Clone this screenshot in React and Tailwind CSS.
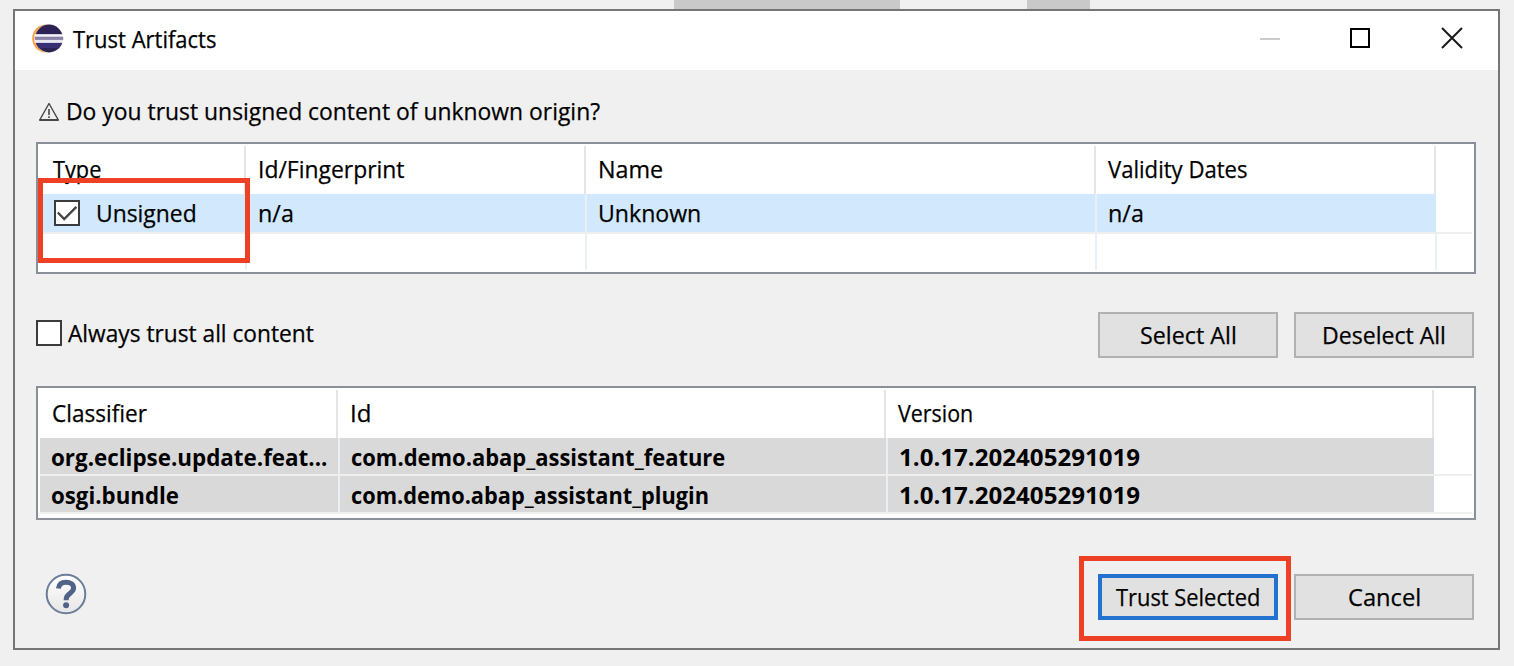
import { useLayoutEffect, useRef, useState } from 'react';

// Single-line label condensed horizontally so that it fills `width` pixels.
function Label({ width, bold, children }) {
  const ref = useRef(null);
  const [scale, setScale] = useState(1);
  useLayoutEffect(() => {
    setScale(width / ref.current.offsetWidth);
  }, [width, children]);
  return (
    <span className="block shrink-0" style={{ width }}>
      <span
        ref={ref}
        className={`inline-block origin-left whitespace-nowrap align-top ${
          bold ? 'font-bold' : '[-webkit-text-stroke:0.25px_#000]'
        }`}
        style={{ transform: `scaleX(${scale})` }}
      >
        {children}
      </span>
    </span>
  );
}

function EclipseLogo() {
  return (
    <svg width="32" height="30" viewBox="0 0 32 30">
      <circle cx="14.2" cy="14.5" r="14" fill="#f7a246" />
      <circle cx="17.2" cy="14.5" r="14.2" fill="#fff3e2" />
      <circle cx="17" cy="14.5" r="13.9" fill="#2c2255" />
      <path d="M4 18h26a14 14 0 0 1-3 6H7a14 14 0 0 1-3-6z" fill="#383075" />
      <path d="M2.5 10.2h28.7v8.6H2.5z" fill="#fff" />
      <path d="M3 11.7h28v1.2H3zM3 16.4h28v1.2H3z" fill="#d4d0e0" />
      <path d="M3 13h28.2v2.9H3z" fill="#8780a8" />
    </svg>
  );
}

function Button({ width, primary, children }) {
  return (
    <button
      type="button"
      className={`flex h-[46px] w-[180px] items-center justify-center bg-[#e1e1e1] ${
        primary ? 'border-4 border-[#2472d0]' : 'border-2 border-[#b1b1b1]'
      }`}
    >
      <Label width={width}>{children}</Label>
    </button>
  );
}

function Checkbox({ checked }) {
  return (
    <span className="flex size-[26px] shrink-0 items-center justify-center border-2 border-[#3c3c3c] bg-white">
      {checked && (
        <svg width="22" height="22" viewBox="0 0 22 22" fill="none" stroke="#444" strokeWidth="2.4">
          <path d="M1.8 10.5 8.2 17 20.4 4.800" />
        </svg>
      )}
    </span>
  );
}

const h = 'flex items-center border-r-2 border-[#e5e5e5] pb-0.5 pl-3';
const blue = 'flex items-center bg-[#d1e8fd] border-r-2 border-[#e7eff8] pl-[11px]';
const blank = 'border-r-2 border-[#e9f1f8]';
const gray = 'flex items-center bg-[#d9d9d9] border-r-2 border-[#eceff2] pl-[11px] pt-0.5';
const grayLast = 'flex items-center bg-[#d9d9d9] border-r-2 border-[#d3d9e1] pl-[11px] pt-0.5';

export default function App() {
  return (
    <div className="relative flex h-[666px] w-[1514px] flex-col overflow-hidden bg-[#f0f0f0] font-['Open_Sans',sans-serif] text-[24px] leading-8 text-black">
      <div className="flex h-[9px] shrink-0 pl-[674px]">
        <div className="w-[226px] bg-[#c9c9c9]" />
        <div className="ml-[127px] w-[63px] bg-[#c9c9c9]" />
      </div>

      <div className="ml-[13px] flex h-[641px] w-[1487px] flex-col border-2 border-[#767676]">
        <header className="flex h-[59px] shrink-0 items-center bg-white pb-[3px] pl-[17px]">
          <EclipseLogo />
          <div className="ml-[9px] flex">
            <Label width={143}>Trust Artifacts</Label>
          </div>
          <svg className="mr-[34px] mb-0.5 ml-auto" width="210" height="24" viewBox="0 0 210 24" fill="none">
            <path d="M6 13h20" stroke="#cbcbcb" strokeWidth="2" />
            <path d="M97 3h18v18H97z" stroke="#000" strokeWidth="2" />
            <path d="M188 2l20 20M208 2l-20 20" stroke="#1a1a1a" strokeWidth="2" />
          </svg>
        </header>

        <main className="flex flex-col pl-[21px]">
          <div className="mt-[25px] flex h-8 items-center">
            <svg className="mt-0.5 ml-0.5" width="22" height="20" viewBox="0 0 22 20" fill="none" stroke="#444">
              <path d="M11 1.5 20.3 18H1.7z" strokeWidth="1.4" strokeLinejoin="round" />
              <path d="M1.5 18h19" strokeWidth="1.8" />
              <path d="M11 7v6M11 14.3v1.8" strokeWidth="1.6" />
            </svg>
            <div className="ml-[6px]">
              <Label width={534}>Do you trust unsigned content of unknown origin?</Label>
            </div>
          </div>

          <section className="mt-[15px] h-[132px] w-[1440px] border-2 border-[#8b8f98] bg-white pl-0.5">
            <div className="grid h-[50px] grid-cols-[206px_340px_510px_340px_36px] pt-0.5">
              <div className="flex items-center border-r-2 border-[#e5e5e5] pb-0.5 pl-[13px]"><Label width={48}>Type</Label></div>
              <div className={h}><Label width={147}>Id/Fingerprint</Label></div>
              <div className={h}><Label width={65}>Name</Label></div>
              <div className={h}><Label width={140}>Validity Dates</Label></div>
              <div />
            </div>
            <div className="grid h-[38px] grid-cols-[207px_340px_510px_339px_36px]">
              <div className={blue}>
                <span className="ml-[3px]"><Checkbox checked /></span>
                <div className="ml-4"><Label width={101}>Unsigned</Label></div>
              </div>
              <div className={blue}><Label width={36}>n/a</Label></div>
              <div className={blue}><Label width={103}>Unknown</Label></div>
              <div className="flex items-center bg-[#d1e8fd] pl-[11px]"><Label width={36}>n/a</Label></div>
              <div />
            </div>
            <div className="h-0.5 w-[1432px] bg-[#efefef]" />
            <div className="grid h-9 grid-cols-[207px_340px_510px_340px_35px]">
              <div className={blank} />
              <div className={blank} />
              <div className={blank} />
              <div className={blank} />
              <div />
            </div>
          </section>

          <div className="mt-[38px] flex h-[46px] w-[1438px] items-center">
            <div className="flex items-center pb-1">
              <Checkbox />
              <div className="ml-[6px]"><Label width={246}>Always trust all content</Label></div>
            </div>
            <div className="ml-auto flex gap-4">
              <Button width={97}>Select All</Button>
              <Button width={124}>Deselect All</Button>
            </div>
          </div>

          <section className="mt-7 h-[134px] w-[1440px] border-2 border-[#8b8f98] bg-white pl-0.5">
            <div className="grid h-[50px] grid-cols-[298px_548px_548px_38px] pt-0.5">
              <div className={h}><Label width={95}>Classifier</Label></div>
              <div className={h}><Label width={21}>Id</Label></div>
              <div className={h}><Label width={75}>Version</Label></div>
              <div />
            </div>
            <div className="grid h-9 grid-cols-[300px_548px_546px_38px]">
              <div className={gray}><Label bold width={276}>org.eclipse.update.feat...</Label></div>
              <div className={gray}><Label bold width={374}>com.demo.abap_assistant_feature</Label></div>
              <div className={grayLast}><Label bold width={241}>1.0.17.202405291019</Label></div>
              <div />
            </div>
            <div className="h-0.5 w-[1432px] bg-[#efefef]" />
            <div className="grid h-9 grid-cols-[300px_548px_546px_38px]">
              <div className={gray}><Label bold width={128}>osgi.bundle</Label></div>
              <div className={gray}><Label bold width={358}>com.demo.abap_assistant_plugin</Label></div>
              <div className={grayLast}><Label bold width={241}>1.0.17.202405291019</Label></div>
              <div />
            </div>
            <div className="h-0.5 w-[1432px] bg-[#efefef]" />
          </section>

          <footer className="mt-[54px] flex h-[46px] w-[1438px] items-center">
            <svg className="mb-[6px] ml-[9px]" width="42" height="42" viewBox="0 0 42 42" fill="none">
              <defs>
                <linearGradient id="help" x1="0" y1="0" x2="0" y2="1">
                  <stop offset="0" stopColor="#fff" />
                  <stop offset="1" stopColor="#e6e6e6" />
                </linearGradient>
              </defs>
              <circle cx="21" cy="21" r="19.3" fill="url(#help)" stroke="#6b7d98" strokeWidth="2" />
              <path
                d="M13.4 15.500C14 11 17.200 9.300 21 9.300c4.600 0 7.600 2.200 7.600 5.800 0 5.200-7.400 5.600-7.400 10.800v1.400"
                stroke="#50648a"
                strokeWidth="5"
              />
              <circle cx="21.100" cy="32.300" r="3" fill="#50648a" />
            </svg>
            <div className="ml-auto flex gap-4">
              <Button primary width={144}>Trust Selected</Button>
              <Button width={73}>Cancel</Button>
            </div>
          </footer>
        </main>
      </div>

      <div className="absolute top-[178px] left-[38px] h-[85px] w-[212px] border-5 border-[#ee4025]" />
      <div className="absolute top-[556px] left-[1079px] h-[85px] w-[212px] border-5 border-[#ee4025]" />
    </div>
  );
}
